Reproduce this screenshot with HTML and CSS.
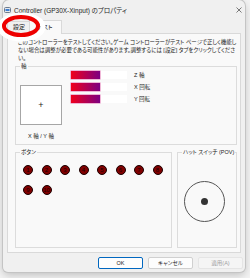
FILE: index.html
```html
<!DOCTYPE html>
<html lang="ja">
<head>
    <meta charset="UTF-8">
    <meta name="viewport" content="width=device-width, initial-scale=1.0">
    <title>Controller (GP30X-Xinput) のプロパティ</title>
    <link rel="stylesheet" href="styles.css">
</head>
<body>
    <!-- Dialog window -->
    <div class="window">
        <div class="titlebar">
            <svg class="app-icon" width="7" height="6" viewBox="0 0 7 6">
                <rect x="0.5" y="0.5" width="6" height="5" rx="1" fill="#e4e8ee" stroke="#6d7b8c"/>
                <rect x="1.5" y="2" width="4" height="2" fill="#3f7fd0"/>
            </svg>
            <span class="title">Controller (GP30X-Xinput) のプロパティ</span>
            <svg class="close" width="6" height="6" viewBox="0 0 6 6">
                <path d="M0.5 0.5 L5.5 5.5 M5.5 0.5 L0.5 5.5" stroke="#444" stroke-width="0.7"/>
            </svg>
        </div>

        <div class="tabs">
            <div class="tab">設定</div>
            <div class="tab active">テスト</div>
        </div>

        <div class="panel">
            <p class="intro">このコントローラーをテストしてください。ゲーム コントローラーがテスト ページで正しく機能しない場合は調整が必要である可能性があります。調整するには [設定] タブをクリックしてください。</p>

            <fieldset class="group axes">
                <legend>軸</legend>
                <div class="axes-body">
                    <div class="xy">
                        <div class="xy-box">+</div>
                        <div class="xy-label">X 軸 / Y 軸</div>
                    </div>
                    <div class="bars">
                        <div class="bar-row"><div class="track"><div class="fill" style="width:52%"></div></div><span>Z 軸</span></div>
                        <div class="bar-row"><div class="track"><div class="fill" style="width:52%"></div></div><span>X 回転</span></div>
                        <div class="bar-row"><div class="track"><div class="fill" style="width:52%"></div></div><span>Y 回転</span></div>
                    </div>
                </div>
            </fieldset>

            <div class="lower">
                <fieldset class="group buttons">
                    <legend>ボタン</legend>
                    <div class="btn-grid">
                        <span class="pad-btn">1</span>
                        <span class="pad-btn">2</span>
                        <span class="pad-btn">3</span>
                        <span class="pad-btn">4</span>
                        <span class="pad-btn">5</span>
                        <span class="pad-btn">6</span>
                        <span class="pad-btn">7</span>
                        <span class="pad-btn">8</span>
                        <span class="pad-btn">9</span>
                        <span class="pad-btn">10</span>
                    </div>
                </fieldset>
                <fieldset class="group hat">
                    <legend>ハット スイッチ (POV)</legend>
                    <div class="pov"><div class="pov-dot"></div></div>
                </fieldset>
            </div>
        </div>

        <div class="actions">
            <button class="primary">OK</button>
            <button>キャンセル</button>
            <button disabled>適用(A)</button>
        </div>
    </div>

    <!-- red callout round the first tab -->
    <svg class="callout" width="50" height="45" viewBox="0 0 50 45">
        <ellipse cx="21.5" cy="27" rx="21.5" ry="12" fill="none" stroke="#fff" stroke-width="5"/>
        <ellipse cx="21" cy="26" rx="17" ry="9" fill="none" stroke="#ee0000" stroke-width="4"/>
    </svg>
</body>
</html>
```

FILE: styles.css
```css
* { box-sizing: border-box; }
body {
    margin: 0;
    width: 250px;
    height: 278px;
    overflow: hidden;
    background: #f3f3f3;
    font-family: "Liberation Sans", "Noto Sans CJK JP", sans-serif;
    font-size: 5.5px;
    color: #1b1b1b;
    font-feature-settings: "palt";
}
.window {
    margin-left: 3px;
    width: 242px;
    height: 272px;
    background: #f0f0f0;
    border-radius: 6px 6px 5px 5px;
    box-shadow: 0 0 0 1px #c4c4c4, 0 3px 8px rgba(0, 0, 0, .22);
    display: flex;
    flex-direction: column;
}
.titlebar {
    height: 20px;
    display: flex;
    align-items: center;
    padding: 0 3px 1px 1px;
}
.app-icon { margin-right: 3px; }
.title { font-size: 6.5px; color: #1f1f1f; }
.close { margin-left: auto; }

.tabs {
    height: 13px;
    display: flex;
    align-items: flex-end;
    padding-left: 4px;
}
.tab {
    height: 12px;
    padding: 0 4px 0 5px;
    line-height: 11px;
    font-size: 6px;
    border: 1px solid #d9d9d9;
    border-bottom: none;
    background: #f0f0f0;
}
.tab.active {
    position: relative;
    z-index: 1;
    height: 14px;
    margin: 0 0 -1px -1px;
    padding: 0 9px 0 7px;
    line-height: 13px;
    background: #f9f9f9;
}

.panel {
    height: 220px;
    margin-left: 4px;
    width: 234px;
    border: 1px solid #d9d9d9;
    background: #f9f9f9;
    padding: 4px 3px 4px 7px;
    display: flex;
    flex-direction: column;
}
.intro { margin: 0 0 0 3px; line-height: 8px; font-size: 5.45px; }

.group {
    margin: 0;
    min-width: 0;
    padding: 0 4px 4px 4px;
    border: 1px solid #dcdcdc;
}
.group legend { padding: 0 1px; line-height: 8px; white-space: nowrap; }

.axes-body { display: flex; gap: 9px; padding-top: 1px; }
.xy { margin-top: 14px; width: 42px; display: flex; flex-direction: column; align-items: center; }
.xy-box {
    width: 42px;
    height: 40px;
    border: 1px solid #a6a6a6;
    background: #fff;
    display: flex;
    align-items: center;
    justify-content: center;
    font-size: 9px;
    color: #222;
}
.xy-label { margin-top: 7px; line-height: 8px; }
.bars { display: flex; flex-direction: column; gap: 4px; }
.bar-row { display: flex; align-items: center; gap: 7px; }
.track { width: 56px; height: 8px; background: #fff; }
.fill {
    height: 100%;
    background: linear-gradient(to right, #f0001c, #7d0082);
    box-shadow: 0 0 0 0.5px #e070b0;
}

.lower { display: flex; gap: 5px; flex: 1; margin-top: 3px; min-height: 0; }
.buttons { width: 157px; }
.hat { flex: 1; }
.btn-grid {
    display: grid;
    grid-template-columns: repeat(8, 10px);
    column-gap: 8.5px;
    row-gap: 10px;
    margin: 9px 0 0 3px;
}
.pad-btn {
    width: 10px;
    height: 10px;
    border-radius: 50%;
    background: #800000;
    border: 1px solid #1a0000;
    color: #1a0000;
    font-size: 6px;
    line-height: 8px;
    text-align: center;
}
.pov {
    width: 41px;
    height: 41px;
    margin: 25px 0 0 2px;
    border: 1px solid #555;
    border-radius: 50%;
    display: flex;
    align-items: center;
    justify-content: center;
}
.pov-dot { width: 7px; height: 7px; border-radius: 50%; background: #333; }

.actions {
    display: flex;
    justify-content: flex-end;
    gap: 5px;
    margin-top: 4px;
    padding-right: 2px;
}
.actions button {
    width: 45px;
    height: 12px;
    padding: 0;
    font: inherit;
    color: #1b1b1b;
    background: #fdfdfd;
    border: 1px solid #d0d0d0;
    border-radius: 2px;
}
.actions button.primary { border-color: #0067c0; }
.actions button:disabled { background: #f5f5f5; color: #a0a0a0; border-color: #e5e5e5; }

.callout { position: absolute; left: 0; top: 0; z-index: 2; }
```
